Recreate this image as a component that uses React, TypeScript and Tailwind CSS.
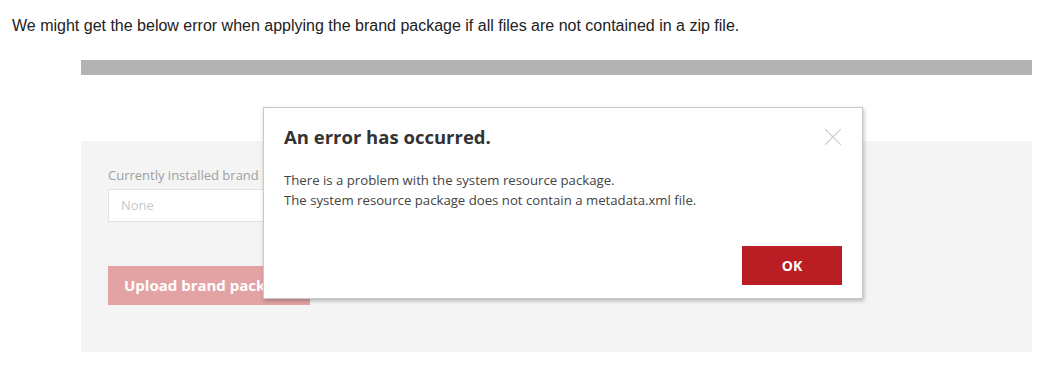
import React from "react";

const segoe = { fontFamily: '"Open Sans", "Noto Sans", sans-serif' };

export default function App() {
  return (
    <div className="relative w-[1063px] h-[365px] bg-white overflow-hidden">
      <p className="pl-[12px] pt-[16px] text-[16px] leading-[20px] text-[#222]" style={{ fontFamily: '"Liberation Sans", Arial, sans-serif' }}>
        We might get the below error when applying the brand package if all files are not contained in a zip file.
      </p>

      <div className="ml-[81px] mt-[24px] w-[951px]">
        <div className="h-[15px] bg-[#b3b3b3]" />
        <div className="h-[66px] bg-white" />
        <div className="h-[211px] bg-[#f4f4f4] pl-[27px] pt-[25px]" style={segoe}>
          <div className="text-[13px] leading-[18px] text-[#a0a0a0]">Currently installed brand package</div>
          <div className="mt-[5px] w-[300px] h-[33px] border border-[#e3e3e3] bg-white pl-[12px] flex items-center text-[13px] text-[#c8c8c8]">
            None
          </div>
          <button className="mt-[44px] w-[202px] h-[39px] bg-[#e3a3a5] text-white font-bold text-[15px] text-left pl-[16px] whitespace-nowrap">
            Upload brand package
          </button>
        </div>
      </div>

      <div
        className="absolute left-[263px] top-[107px] w-[600px] h-[192px] bg-white border border-[#c9c9c9] shadow-[1px_2px_4px_rgba(0,0,0,0.25)] flex flex-col pl-[20px] pr-[20px]"
        style={segoe}
      >
        <div className="flex items-start justify-between pt-[15px]">
          <h2 className="text-[18.5px] leading-[28px] font-bold text-[#333]">An error has occurred.</h2>
          <svg width="18" height="18" viewBox="0 0 18 18" className="mt-[5px]">
            <path d="M1 1 L17 17 M17 1 L1 17" stroke="#d0d0d0" strokeWidth="1.2" />
          </svg>
        </div>
        <div className="mt-[19px] text-[13.2px] leading-[20px] text-[#444]">
          <div>There is a problem with the system resource package.</div>
          <div>The system resource package does not contain a metadata.xml file.</div>
        </div>
        <div className="flex justify-end mt-[36px]">
          <button className="w-[100px] h-[39px] bg-[#bb1d24] text-white font-bold text-[14px]">OK</button>
        </div>
      </div>
    </div>
  );
}
